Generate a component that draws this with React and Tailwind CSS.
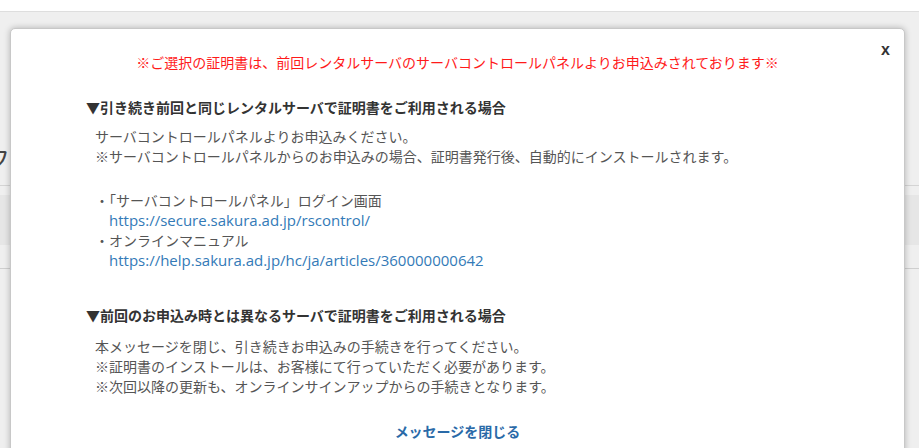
export default function App() {
  const jp = { fontFamily: '"Noto Sans CJK JP", "Noto Sans", sans-serif' };
  const link = { fontFamily: '"Open Sans", "Noto Sans CJK JP", sans-serif' };
  return (
    <div className="relative w-[919px] h-[448px] overflow-hidden bg-[#efefef]" style={jp}>
      {/* background page */}
      <div className="h-[12px] bg-white border-b border-[#dedede]" />
      <div className="absolute left-0 top-[146px] text-[24px] leading-[24px] text-[#444] -ml-[14px]">フ</div>
      <div className="absolute left-0 right-0 top-[185px] h-px bg-[#d4d4d4]" />
      <div className="absolute left-0 right-0 top-[195px] h-[50px] bg-[#e6e6e6]" />
      <div className="absolute left-0 right-0 top-[268px] h-px bg-[#cfcfcf]" />

      {/* modal */}
      <div className="absolute left-[10px] top-[28px] w-[895px] h-[440px] bg-white rounded-[5px] border border-[#c8c8c8] shadow-[0_0_6px_rgba(0,0,0,0.25)]">
        <button className="absolute right-[14px] top-[12px] text-[16px] leading-[18px] font-bold text-[#333]" style={{ fontFamily: '"Liberation Sans", sans-serif' }}>x</button>
        <div className="flex flex-col pt-[23px] text-[14px] leading-[20px]">
          <p className="text-center text-[#ff1a1a]">※ご選択の証明書は、前回レンタルサーバのサーバコントロールパネルよりお申込みされております※</p>

          <div className="flex flex-col pl-[75px]">
            <h2 className="mt-[25px] font-bold text-[#333]">▼引き続き前回と同じレンタルサーバで証明書をご利用される場合</h2>
            <div className="flex flex-col gap-[24px] pt-[9px] pl-[9px] text-[#555]">
              <p>サーバコントロールパネルよりお申込みください。<br />※サーバコントロールパネルからのお申込みの場合、証明書発行後、自動的にインストールされます。</p>
              <div className="flex flex-col">
                <p>・「サーバコントロールパネル」ログイン画面</p>
                <p className="pl-[14px] text-[15px] text-[#337ab7]" style={link}>https://secure.sakura.ad.jp/rscontrol/</p>
                <p>・オンラインマニュアル</p>
                <p className="pl-[14px] text-[15px] text-[#337ab7]" style={link}>https://help.sakura.ad.jp/hc/ja/articles/360000000642</p>
              </div>
            </div>

            <h2 className="mt-[35px] font-bold text-[#333]">▼前回のお申込み時とは異なるサーバで証明書をご利用される場合</h2>
            <div className="pt-[11px] pl-[9px] text-[#555]">
              <p>本メッセージを閉じ、引き続きお申込みの手続きを行ってください。<br />※証明書のインストールは、お客様にて行っていただく必要があります。<br />※次回以降の更新も、オンラインサインアップからの手続きとなります。</p>
            </div>
          </div>

          <p className="mt-[25px] text-center font-bold text-[#2a6aa8]">メッセージを閉じる</p>
        </div>
      </div>
    </div>
  );
}
